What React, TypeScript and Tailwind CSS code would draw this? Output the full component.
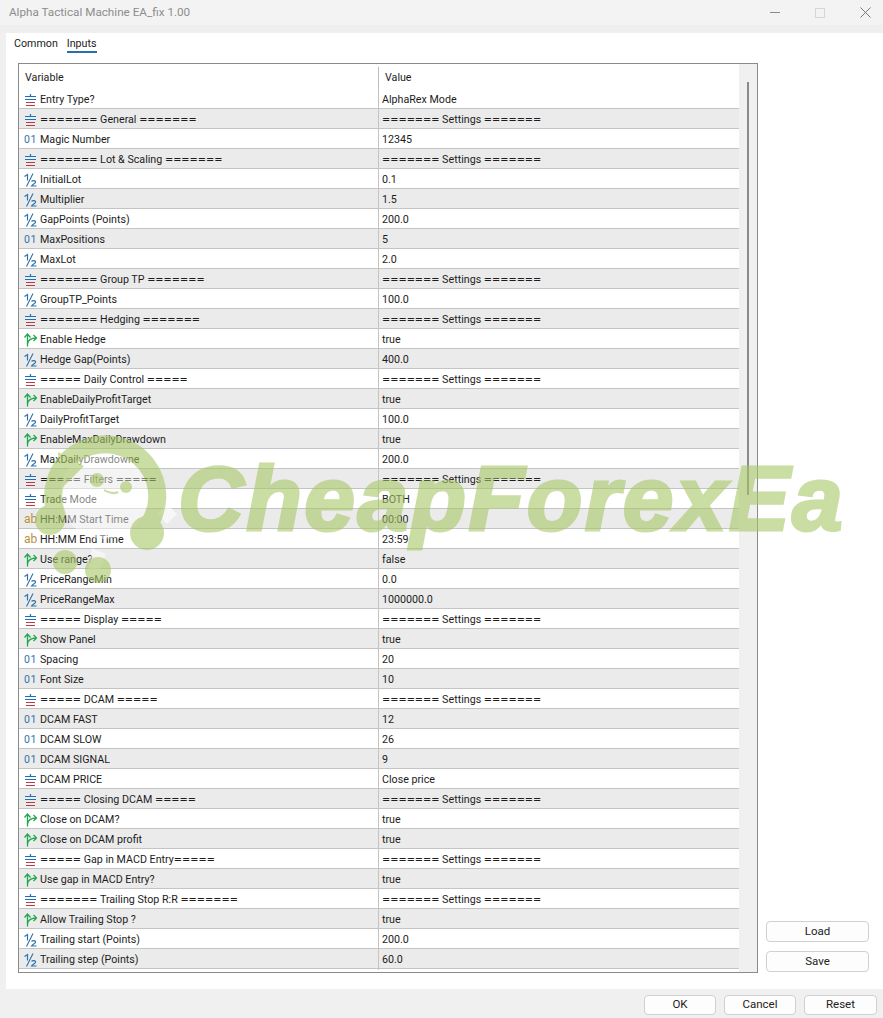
type Kind = "enum" | "int" | "dbl" | "bool" | "str";

const S = "======= Settings =======";

const rows: [Kind, string, string][] = [
  ["enum", "Entry Type?", "AlphaRex Mode"],
  ["enum", "======= General =======", S],
  ["int", "Magic Number", "12345"],
  ["enum", "======= Lot & Scaling =======", S],
  ["dbl", "InitialLot", "0.1"],
  ["dbl", "Multiplier", "1.5"],
  ["dbl", "GapPoints (Points)", "200.0"],
  ["int", "MaxPositions", "5"],
  ["dbl", "MaxLot", "2.0"],
  ["enum", "======= Group TP =======", S],
  ["dbl", "GroupTP_Points", "100.0"],
  ["enum", "======= Hedging =======", S],
  ["bool", "Enable Hedge", "true"],
  ["dbl", "Hedge Gap(Points)", "400.0"],
  ["enum", "===== Daily Control =====", S],
  ["bool", "EnableDailyProfitTarget", "true"],
  ["dbl", "DailyProfitTarget", "100.0"],
  ["bool", "EnableMaxDailyDrawdown", "true"],
  ["dbl", "MaxDailyDrawdowne", "200.0"],
  ["enum", "===== Filters =====", S],
  ["enum", "Trade Mode", "BOTH"],
  ["str", "HH:MM Start Time", "00:00"],
  ["str", "HH:MM End Time", "23:59"],
  ["bool", "Use range?", "false"],
  ["dbl", "PriceRangeMin", "0.0"],
  ["dbl", "PriceRangeMax", "1000000.0"],
  ["enum", "===== Display =====", S],
  ["bool", "Show Panel", "true"],
  ["int", "Spacing", "20"],
  ["int", "Font Size", "10"],
  ["enum", "===== DCAM =====", S],
  ["int", "DCAM FAST", "12"],
  ["int", "DCAM SLOW", "26"],
  ["int", "DCAM SIGNAL", "9"],
  ["enum", "DCAM PRICE", "Close price"],
  ["enum", "===== Closing DCAM =====", S],
  ["bool", "Close on DCAM?", "true"],
  ["bool", "Close on DCAM profit", "true"],
  ["enum", "===== Gap in MACD Entry=====", S],
  ["bool", "Use gap in MACD Entry?", "true"],
  ["enum", "======= Trailing Stop R:R =======", S],
  ["bool", "Allow Trailing Stop ?", "true"],
  ["dbl", "Trailing start (Points)", "200.0"],
  ["dbl", "Trailing step (Points)", "60.0"],
];

// the = runs are much wider in the original font
const Label = ({ text }: { text: string }) => (
  <>
    {text.split(/(=+)/).map((part, i) =>
      part.startsWith("=") ? (
        <span key={i} className="font-['DejaVu_Sans',sans-serif] text-[9.800px]">
          {part}
        </span>
      ) : (
        <span key={i}>{part}</span>
      ),
    )}
  </>
);

const TypeIcon = ({ kind }: { kind: Kind }) => {
  if (kind === "int") {
    return <span className="w-[13px] shrink-0 text-center text-[10.500px] tracking-[0.6px] text-[#2f74ab]">01</span>;
  }
  if (kind === "str") {
    return <span className="w-[13px] shrink-0 text-center text-[12px] text-[#b8913f]">ab</span>;
  }
  return (
    <svg width="13" height="14" viewBox="0 0 13 14" fill="none" className="shrink-0">
      {kind === "enum" && (
        <>
          <path d="M6.500 1v2" stroke="#1f6fb5" strokeWidth="1.200" />
          <path d="M1 3.500h11M1 6.500h11" stroke="#1f6fb5" strokeWidth="1.200" />
          <path d="M2 9.500h9M2 12.500h9" stroke="#b93a44" strokeWidth="1.200" />
        </>
      )}
      {kind === "dbl" && (
        <>
          <path d="M.5 3.500L3.500 1.500v6" stroke="#2f74ab" strokeWidth="1.200" />
          <path d="M2.500 13.500L9 .5" stroke="#2f74ab" strokeWidth="1.100" />
          <path d="M7.500 8.500c1-1.500 4.500-1 4 .8-.3 1-3 2.200-4 3.700h5" stroke="#2f74ab" strokeWidth="1.200" />
        </>
      )}
      {kind === "bool" && (
        <>
          <path d="M3.500 13.500V1M.5 4.500l3-3.500 3 3.500" stroke="#1fa84e" strokeWidth="1.300" />
          <path d="M3.500 10.500c.8-4 3.500-5.500 9-5.500M9.500 2l3.200 3-3.200 3" stroke="#1fa84e" strokeWidth="1.300" />
        </>
      )}
    </svg>
  );
};

const Watermark = () => (
  <div className="pointer-events-none absolute left-0 top-0 h-[1018px] w-[883px]">
    <svg width="883" height="1018" viewBox="0 0 883 1018" fill="none" className="absolute left-0 top-0">
      <circle cx="104" cy="495" r="44" fill="#ffffff" opacity="0.45" />
      <path d="M167 504l10 10-10 10-10-10z" fill="#ffffff" opacity="0.6" />
      <path d="M92 548l14 6-10 22-8-6z" fill="#ffffff" opacity="0.5" />
      <g opacity="0.6">
        <path d="M58 518A52 52 0 1 1 142 533" stroke="#a8c766" strokeWidth="18" />
        <path d="M58 452l26 14-24 24z" fill="#a8c766" />
        <circle cx="50" cy="520" r="15" fill="#a8c766" />
        <circle cx="97" cy="480" r="7" fill="#a8c766" />
        <circle cx="126" cy="487" r="6" fill="#a8c766" />
        <path d="M104 490q8 5 14 2" stroke="#a8c766" strokeWidth="2" />
        <circle cx="147" cy="533" r="17" fill="#a8c766" />
        <circle cx="65" cy="562" r="12" fill="#a8c766" />
        <circle cx="98" cy="570" r="13" fill="#a8c766" />
      </g>
    </svg>
    <span className="absolute left-[178px] top-[447px] whitespace-nowrap text-[91px] font-bold italic leading-[104px] tracking-[2.500px] text-[#a8c766] opacity-60 font-['Liberation_Sans',sans-serif] [-webkit-text-stroke:3px_#a8c766]">
      CheapForexEa
    </span>
  </div>
);

const Button = ({ label, className }: { label: string; className: string }) => (
  <button className={`rounded-[4px] border border-[#d0d0d0] bg-[#fdfdfd] text-center text-[11.500px] text-[#222] ${className}`}>
    {label}
  </button>
);

export default function App() {
  return (
    <div className="relative flex h-[1018px] w-[883px] flex-col overflow-hidden bg-[#f0f0f0] font-['Roboto',sans-serif] text-[10.700px] text-[#1c1c1c]">
      <div className="flex h-[25px] items-center justify-between bg-[#f3f3f3] pl-[9px] pr-[12px] text-[11.700px] text-[#8d8d8d]">
        <span>Alpha Tactical Machine EA_fix 1.00</span>
        <div className="flex items-center gap-[35px]">
          <span className="h-px w-[10px] bg-[#8a8a8a]" />
          <span className="h-[10px] w-[10px] border border-[#d6d6d6]" />
          <svg width="11" height="11" viewBox="0 0 11 11" stroke="#777">
            <path d="M.5.5l10 10M10.500.5l-10 10" />
          </svg>
        </div>
      </div>
      <div className="h-[8px] bg-[#efefef]" />

      <div className="ml-[6px] flex h-[956px] flex-col bg-white">
        <div className="flex h-[20px] gap-[9px] pl-[8px] pt-[3px]">
          <span className="leading-[16px]">Common</span>
          <span className="relative leading-[16px]">
            Inputs
            <span className="absolute bottom-0 left-0 h-[2px] w-full bg-[#2272a8]" />
          </span>
        </div>
        <div className="flex flex-1 pl-[12px] pt-[10px]">
          <div className="flex h-[910px] w-[740px] border border-[#8a8a8a]">
            <div className="flex-1">
              <div className="grid h-[25px] grid-cols-[359px_1fr] pt-[3px]">
                <span className="pl-[6px] leading-[21px]">Variable</span>
                <span className="border-l border-[#bcbcbc] pl-[6px] leading-[21px]">Value</span>
              </div>
              {rows.map(([kind, name, value], i) => (
                <div
                  key={i}
                  className={`grid h-[20px] grid-cols-[359px_1fr] border-b border-[#c4c4c4] leading-[19px] ${i % 2 === 1 ? "bg-[#ebebeb]" : "bg-white"}`}
                >
                  <div className="flex h-full items-center gap-[3px] pl-[5px]">
                    <TypeIcon kind={kind} />
                    <span className="whitespace-pre">
                      <Label text={name} />
                    </span>
                  </div>
                  <span className="h-full border-l border-[#c4c4c4] pl-[3px] leading-[21px]">
                    <Label text={value} />
                  </span>
                </div>
              ))}
            </div>
            <div className="flex w-[18px] justify-center bg-[#f0f0f0] pt-[18px]">
              <div className="h-[413px] w-[2px] bg-[#8a8a8a]" />
            </div>
          </div>
          <div className="ml-[8px] flex flex-1 flex-col justify-end gap-[9px] pb-[17px] pr-[14px]">
            <Button label="Load" className="h-[21px] w-[103px]" />
            <Button label="Save" className="h-[21px] w-[103px]" />
          </div>
        </div>
      </div>

      <div className="flex flex-1 items-center justify-end gap-[8px] pr-[6px] pt-[2px]">
        <Button label="OK" className="h-[20px] w-[72px]" />
        <Button label="Cancel" className="h-[20px] w-[72px]" />
        <Button label="Reset" className="h-[20px] w-[73px]" />
      </div>
      <Watermark />
    </div>
  );
}
